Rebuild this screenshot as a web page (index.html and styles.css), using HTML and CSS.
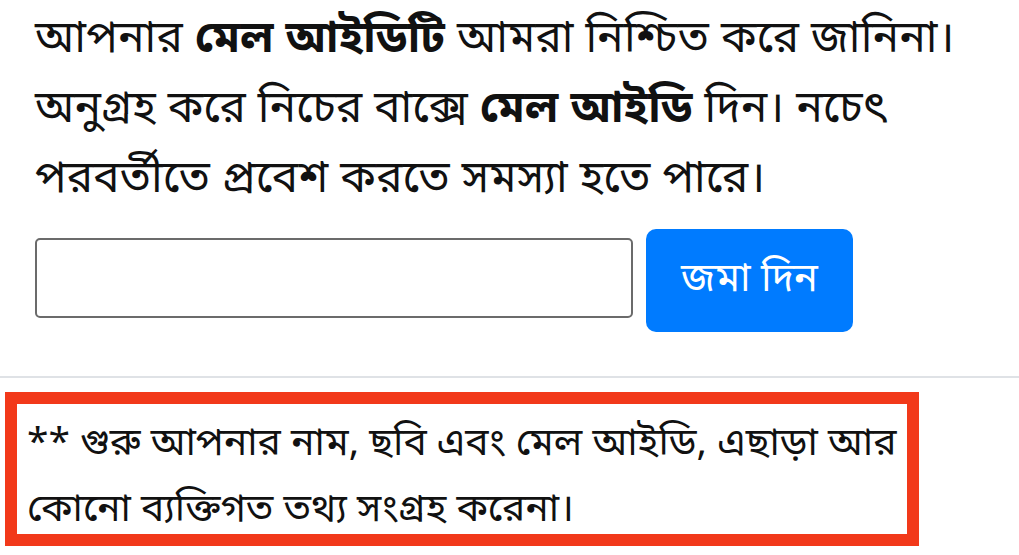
FILE: index.html
```html
<!DOCTYPE html>
<html lang="bn">
<head>
    <meta charset="UTF-8">
    <meta name="viewport" content="width=device-width, initial-scale=1.0">
    <title>মেল আইডি</title>
    <link rel="stylesheet" href="styles.css">
</head>
<body>
    <div class="container">
        <p class="intro">আপনার <b>মেল আইডিটি</b> আমরা নিশ্চিত করে জানিনা।<br>অনুগ্রহ করে নিচের বাক্সে <b>মেল আইডি</b> দিন। নচেৎ<br>পরবর্তীতে প্রবেশ করতে সমস্যা হতে পারে।</p>
        <form class="mail-form">
            <input type="email" class="mail-input">
            <button type="submit" class="mail-btn">জমা দিন</button>
        </form>
    </div>
    <hr class="divider">
    <div class="note">
        <p>** গুরু আপনার নাম, ছবি এবং মেল আইডি, এছাড়া আর<br>কোনো ব্যক্তিগত তথ্য সংগ্রহ করেনা।</p>
    </div>
</body>
</html>
```

FILE: styles.css
```css
body { margin: 0; font-family: "Noto Sans Bengali", "Noto Sans", "DejaVu Sans", sans-serif; color: #111; background: #fff; }
.container { padding: 0 0 0 35px; }
.intro { margin: 0; padding-top: 6px; font-size: 44px; line-height: 70px; white-space: nowrap; letter-spacing: 0.3px; }
.intro b { font-weight: bold; }
.mail-form { display: flex; align-items: flex-start; gap: 13px; margin-top: 13px; }
.mail-input { width: 598px; height: 80px; margin-top: 9px; box-sizing: border-box; border: 2px solid #6b6b6b; border-radius: 5px; }
.mail-btn { width: 207px; height: 103px; background-color: #007bff; color: #fff; border: none; border-radius: 10px; font-family: inherit; font-size: 40px; cursor: pointer; }
.divider { margin: 44px 0 0; border: none; border-top: 2px solid #dfe2e6; }
.note { margin: 14px 100px 0 5px; border: 12px solid #f2391a; padding: 8px 10px 0; height: 122px; box-sizing: content-box; }
.note p { margin: 0; font-size: 39px; line-height: 66px; white-space: nowrap; }
```
